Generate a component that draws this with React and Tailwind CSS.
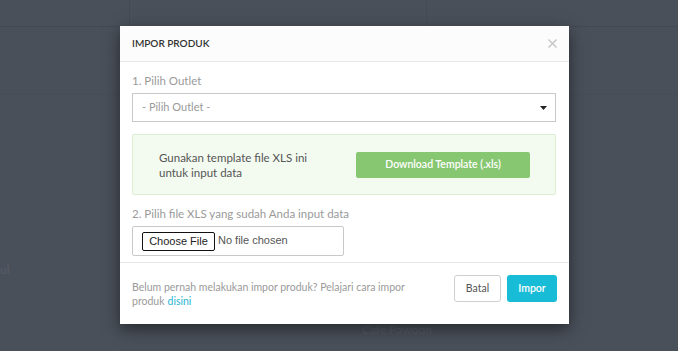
export default function App() {
  const font = { fontFamily: '"Lato", "Noto Sans", sans-serif' };
  const arial = { fontFamily: '"Liberation Sans", Arial, sans-serif' };
  return (
    <div className="relative w-[678px] h-[351px] overflow-hidden bg-[#4a505a]" style={font}>
      {/* faint page content behind the overlay */}
      <div className="flex h-[27px] border-b border-[#434952]">
        <div className="w-[130px] border-r border-[#454b55]" />
        <div className="w-[297px] border-r border-[#454b55]" />
        <div className="flex-1" />
      </div>
      <div className="flex h-[68px] border-b border-[#474d57] items-center">
        <span className="ml-[110px] text-[10px] text-[#565c66]">-</span>
      </div>
      <div className="mt-[168px] h-[14px] flex">
        <span className="text-[12px] leading-[14px] text-[#575d66]">ul</span>
      </div>
      <div className="mt-[46px] h-[14px] flex">
        <span className="ml-[362px] text-[12px] leading-[14px] text-[#555b64]">Cafe Pawoon</span>
      </div>

      {/* modal */}
      <div className="absolute left-[120px] top-[26px] w-[449px] h-[298px] bg-white flex flex-col shadow-[0_5px_15px_rgba(0,0,0,0.5)]">
        <div className="h-[36px] shrink-0 flex items-center justify-between pl-[12px] pr-[13px] bg-[#fcfcfc] border-b border-[#e8e8e8]">
          <span className="text-[10px] font-semibold text-[#333]">IMPOR PRODUK</span>
          <svg width="9" height="9" viewBox="0 0 9 9" className="mr-[-1px]">
            <path d="M0.5 0.5L8.5 8.5M8.5 0.5L0.5 8.5" stroke="#c2c2c2" strokeWidth="1.2" />
          </svg>
        </div>

        <div className="flex flex-col pl-[12px] pr-[13px] pt-[11px] pb-[6px]">
          <div className="text-[11.5px] leading-[16px] text-[#9a9a9a]">1. Pilih Outlet</div>
          <div className="mt-[4px] h-[29px] border border-[#c9c9c9] flex items-center justify-between pl-[9px] pr-[8px]">
            <span className="text-[11px] text-[#9a9a9a]">- Pilih Outlet -</span>
            <svg width="7" height="4" viewBox="0 0 7 4">
              <path d="M0 0H7L3.5 4Z" fill="#222" />
            </svg>
          </div>

          <div className="mt-[12px] h-[61px] rounded-[2px] border border-[#dcedd4] bg-[#f3faf0] flex items-center justify-between pl-[26px] pr-[25px]">
            <div className="text-[11.5px] leading-[15px] text-[#555]">
              <div>Gunakan template file XLS ini</div>
              <div>untuk input data</div>
            </div>
            <div className="w-[174px] h-[26px] rounded-[2px] bg-[#87c771] flex items-center justify-center text-[10.5px] font-semibold text-white">
              Download Template (.xls)
            </div>
          </div>

          <div className="mt-[11px] text-[11.5px] leading-[16px] text-[#9a9a9a]">2. Pilih file XLS yang sudah Anda input data</div>
          <div className="mt-[4px] w-[212px] h-[30px] border border-[#c9c9c9] rounded-[2px] flex items-center pl-[9px]">
            <span className="h-[19px] w-[73px] border border-[#111] rounded-[2px] bg-white flex items-center justify-center text-[11px] text-[#222]" style={arial}>
              Choose File
            </span>
            <span className="ml-[3px] text-[11px] text-[#555] pb-[2px]" style={arial}>
              No file chosen
            </span>
          </div>
        </div>

        <div className="flex-1 border-t border-[#e8e8e8] flex items-start justify-between pl-[12px] pr-[12px] pt-[12px]">
          <div className="pt-[5px] flex flex-col text-[10.5px] leading-[14px] text-[#9a9a9a]">
            <span>Belum pernah melakukan impor produk? Pelajari cara impor</span>
            <span className="flex gap-[3px]">
              <span>produk</span>
              <span className="text-[#1fb5d3]">disini</span>
            </span>
          </div>
          <div className="flex gap-[6px]">
            <div className="w-[47px] h-[27px] rounded-[3px] border border-[#cfcfcf] bg-white flex items-center justify-center text-[10.5px] text-[#555]">
              Batal
            </div>
            <div className="w-[50px] h-[27px] rounded-[3px] bg-[#19bcd6] flex items-center justify-center text-[10.5px] font-semibold text-white">
              Impor
            </div>
          </div>
        </div>
      </div>
    </div>
  );
}
